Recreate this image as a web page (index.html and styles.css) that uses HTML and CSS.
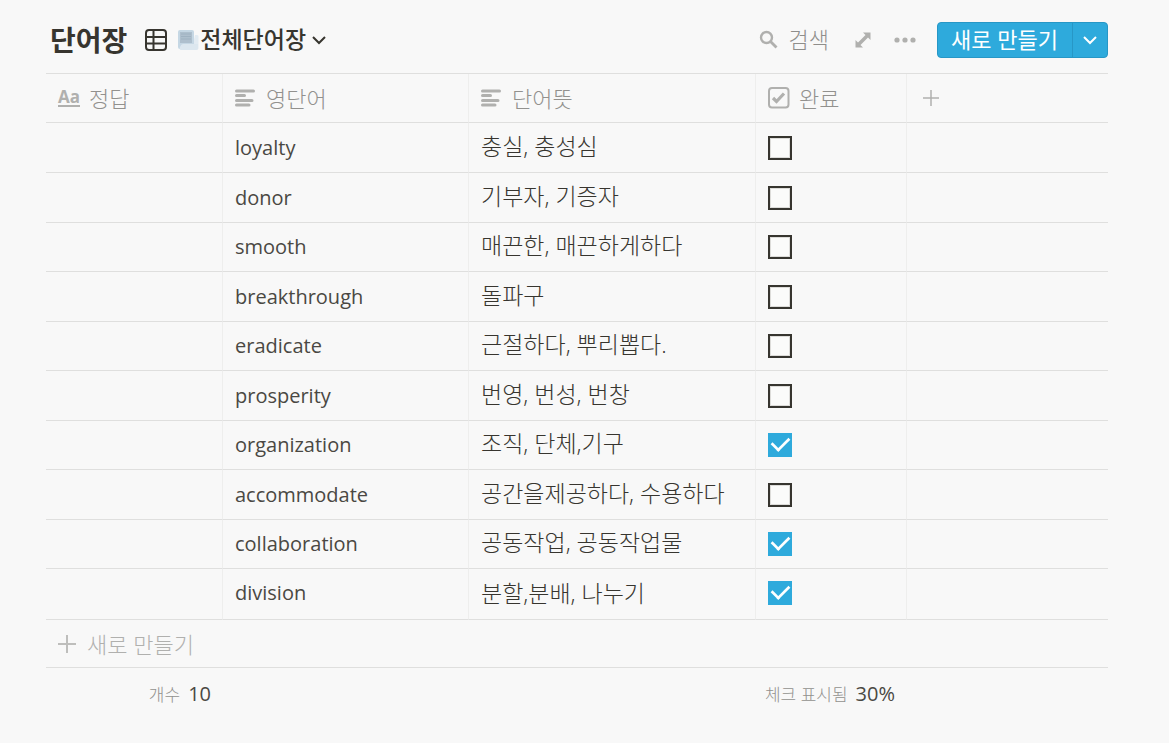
FILE: index.html
```html
<!DOCTYPE html>
<html lang="ko">
<head>
<meta charset="utf-8">
<meta name="viewport" content="width=device-width, initial-scale=1">
<title>단어장</title>
<link rel="stylesheet" href="styles.css">
</head>
<body>
<main class="database">
  <header class="toolbar">
    <h1 class="title">단어장</h1>
    <button type="button" class="view-button">
      <svg class="icon-grid" width="22" height="22" viewBox="0 0 22 22" fill="none" stroke="currentColor" stroke-width="2" aria-hidden="true"><rect x="1" y="1" width="20" height="20" rx="3"/><path d="M1 8h20M1 14.500h20M8.500 1v20"/></svg>
      <svg class="icon-page" width="22" height="22" viewBox="0 0 22 22" aria-hidden="true"><path d="M18 6c3 0 3 0 3.500 1v12q0 2-3 2h-4z" fill="#e2ebf2"/><path d="M3 1h12q2 0 2 2v17H3q-2 0-2-2V3q0-2 2-2z" fill="#c5d7e4"/><path d="M3 3h12v11H3z" fill="#aebfcd"/><path d="M4 5h10M4 7.500h10M4 10h10" stroke="#9fb2c1"/><path d="M6 15h15v4q0 2-2 2H4q-2 0-1-3 1-3 3-3z" fill="#dce7ef"/></svg>
      <span class="view-name">전체단어장</span>
      <svg class="icon-chevron" width="14" height="10" viewBox="0 0 14 10" fill="none" stroke="currentColor" stroke-width="2" aria-hidden="true"><path d="M1 2l6 6 6-6"/></svg>
    </button>
    <div class="actions">
      <button type="button" class="search-button">
        <svg width="20" height="20" viewBox="0 0 20 20" fill="none" stroke="#b0b0ae" aria-hidden="true"><circle cx="7.500" cy="7.500" r="5.500" stroke-width="2.400"/><path d="M11.500 11.500l6 6" stroke-width="2.800"/></svg>
        <span>검색</span>
      </button>
      <button type="button" class="icon-button" aria-label="전체 페이지로 열기">
        <svg width="16" height="16" viewBox="0 0 16 16" fill="#b0b0ae" aria-hidden="true"><path d="M8 0.500h7.500V8l-2.500-2.500-7.500 7.500L8 15.500H0.500V8l2.500 2.500 7.500-7.500z"/></svg>
      </button>
      <button type="button" class="icon-button more-button" aria-label="더 보기">
        <svg width="22" height="6" viewBox="0 0 22 6" fill="#b0b0ae" aria-hidden="true"><circle cx="3" cy="3" r="2.600"/><circle cx="11" cy="3" r="2.600"/><circle cx="19" cy="3" r="2.600"/></svg>
      </button>
      <div class="create">
        <button type="button" class="create-main">새로 만들기</button>
        <button type="button" class="create-menu" aria-label="템플릿 선택">
          <svg width="14" height="10" viewBox="0 0 14 10" fill="none" stroke="currentColor" stroke-width="2" aria-hidden="true"><path d="M1 2l6 6 6-6"/></svg>
        </button>
      </div>
    </div>
  </header>

  <table class="grid">
    <colgroup><col class="col-answer"><col class="col-word"><col class="col-meaning"><col class="col-done"><col></colgroup>
    <thead>
      <tr>
        <th scope="col"><span class="head"><span class="icon-aa" aria-hidden="true">Aa</span>정답</span></th>
        <th scope="col"><span class="head head-text"><svg width="20" height="18" viewBox="0 0 20 18" stroke="#b0b0ae" stroke-width="3" stroke-linecap="round" aria-hidden="true"><path d="M1.500 2h17M1.500 6.500h8M1.500 11.500h15.500M1.500 16h12.500"/></svg>영단어</span></th>
        <th scope="col"><span class="head head-text"><svg width="20" height="18" viewBox="0 0 20 18" stroke="#b0b0ae" stroke-width="3" stroke-linecap="round" aria-hidden="true"><path d="M1.500 2h17M1.500 6.500h8M1.500 11.500h15.500M1.500 16h12.500"/></svg>단어뜻</span></th>
        <th scope="col"><span class="head"><svg width="22" height="22" viewBox="0 0 22 22" fill="none" stroke="#b0b0ae" aria-hidden="true"><rect x="1" y="1" width="19.500" height="19.500" rx="3" stroke-width="2"/><path d="M5 11l3.500 3.500 7.500-8" stroke-width="3.200"/></svg>완료</span></th>
        <th scope="col"><button type="button" class="add-column" aria-label="속성 추가"><svg width="16" height="16" viewBox="0 0 16 16" stroke="#b0b0ae" stroke-width="1.500" aria-hidden="true"><path d="M0 8h16M8 0v16"/></svg></button></th>
      </tr>
    </thead>
    <tbody>
      <tr><td></td><td class="word">loyalty</td><td class="meaning">충실, 충성심</td><td><input type="checkbox" class="check" aria-label="loyalty 완료"></td><td></td></tr>
      <tr><td></td><td class="word">donor</td><td class="meaning">기부자, 기증자</td><td><input type="checkbox" class="check" aria-label="donor 완료"></td><td></td></tr>
      <tr><td></td><td class="word">smooth</td><td class="meaning">매끈한, 매끈하게하다</td><td><input type="checkbox" class="check" aria-label="smooth 완료"></td><td></td></tr>
      <tr><td></td><td class="word">breakthrough</td><td class="meaning">돌파구</td><td><input type="checkbox" class="check" aria-label="breakthrough 완료"></td><td></td></tr>
      <tr><td></td><td class="word">eradicate</td><td class="meaning">근절하다, 뿌리뽑다.</td><td><input type="checkbox" class="check" aria-label="eradicate 완료"></td><td></td></tr>
      <tr><td></td><td class="word">prosperity</td><td class="meaning">번영, 번성, 번창</td><td><input type="checkbox" class="check" aria-label="prosperity 완료"></td><td></td></tr>
      <tr><td></td><td class="word">organization</td><td class="meaning">조직, 단체,기구</td><td><input type="checkbox" class="check" aria-label="organization 완료" checked></td><td></td></tr>
      <tr><td></td><td class="word">accommodate</td><td class="meaning">공간을제공하다, 수용하다</td><td><input type="checkbox" class="check" aria-label="accommodate 완료"></td><td></td></tr>
      <tr><td></td><td class="word">collaboration</td><td class="meaning">공동작업, 공동작업물</td><td><input type="checkbox" class="check" aria-label="collaboration 완료" checked></td><td></td></tr>
      <tr><td></td><td class="word">division</td><td class="meaning">분할,분배, 나누기</td><td><input type="checkbox" class="check" aria-label="division 완료" checked></td><td></td></tr>
    </tbody>
    <tfoot>
      <tr class="new-row"><td colspan="5"><button type="button" class="new-button"><svg width="18" height="18" viewBox="0 0 18 18" stroke="#bebebc" stroke-width="2" aria-hidden="true"><path d="M0 9h18M9 0v18"/></svg>새로 만들기</button></td></tr>
      <tr class="summary"><td><span class="label">개수</span><span class="value">10</span></td><td></td><td></td><td><span class="label">체크 표시됨</span><span class="value">30%</span></td><td></td></tr>
    </tfoot>
  </table>
</main>
</body>
</html>
```
FILE: styles.css
```css
* {
  box-sizing: border-box;
}

body {
  margin: 0;
  background: #f8f8f8;
  color: #37352f;
  font-family: "Open Sans", "Noto Sans CJK KR", sans-serif;
  font-size: 22px;
  line-height: 30px;
}

button {
  display: flex;
  align-items: center;
  margin: 0;
  padding: 0;
  border: 0;
  background: none;
  color: inherit;
  font: inherit;
  white-space: nowrap;
  cursor: pointer;
}

svg {
  flex: none;
  display: block;
}

.database {
  padding: 7px 61px 24px 46px;
}

.toolbar {
  display: flex;
  align-items: center;
  height: 66px;
  padding-left: 4px;
}

.title {
  margin: 0 18px 0 0;
  padding-bottom: 2px;
  font-size: 28px;
  font-weight: 600;
  font-family: "Noto Sans CJK KR", sans-serif;
  line-height: 36px;
}

.view-button {
  font-weight: 500;
}

.view-name {
  font-size: 23px;
}

.icon-page {
  margin: 0 1px 0 10px;
}

.icon-chevron {
  margin-left: 6px;
}

.view-name,
.search-button span,
.create-main {
  padding-bottom: 2px;
}

.actions {
  display: flex;
  align-items: center;
  margin-left: auto;
}

.search-button {
  gap: 10px;
  color: #8f8e8b;
  font-weight: 300;
}

.icon-button {
  margin-left: 26px;
}

.more-button {
  margin-left: 23px;
}

.create {
  display: flex;
  height: 36px;
  margin-left: 21px;
  border: 1px solid #2797c6;
  border-radius: 4px;
  background: #2eaadc;
  color: #fff;
}

.create-main {
  padding-left: 13px;
  padding-right: 14px;
  font-weight: 400;
}

.create-menu {
  padding: 0 10px;
  border-left: 1px solid #2797c6;
}

.grid {
  width: 100%;
  table-layout: fixed;
  border-collapse: separate;
  border-spacing: 0;
  border-top: 1px solid #dfdfde;
  font-weight: 300;
}

.col-answer {
  width: 177px;
}

.col-word {
  width: 246px;
}

.col-meaning {
  width: 287px;
}

.col-done {
  width: 151px;
}

th,
td {
  height: 50px;
  padding: 0 12px;
  border-right: 1px solid #eeeeed;
  border-bottom: 1px solid #dfdfde;
  text-align: left;
  vertical-align: middle;
  white-space: nowrap;
}

th {
  height: 49px;
  color: #92918e;
  font-weight: 300;
}

tr > :last-child {
  border-right: 0;
}

tbody tr:nth-child(2n + 3) td {
  height: 49px;
}

tbody tr:last-child td {
  height: 51px;
  padding-bottom: 2px;
}

.head {
  display: flex;
  align-items: center;
  gap: 9px;
}

.head-text {
  gap: 11px;
}

.icon-aa {
  border-bottom: 2px solid #b0b0ae;
  color: #b0b0ae;
  font-size: 17px;
  font-weight: 700;
  line-height: 16px;
}

.add-column {
  margin-left: 4px;
}

.word {
  color: #4a4843;
  font-size: 20px;
  font-weight: 400;
}

.meaning {
  padding-bottom: 4px;
  font-size: 23px;
}

.check {
  appearance: none;
  display: grid;
  place-items: center;
  width: 24px;
  height: 24px;
  margin: 0;
  border: 2px solid #37352f;
  background: #fbfbfa;
  box-shadow: inset 0 0 0 1px #dddcd9;
}

.check:checked {
  border-color: #2eaadc;
  background: #2eaadc;
  box-shadow: none;
}

.check:checked::before {
  content: "";
  width: 16px;
  height: 9px;
  border: solid #fff;
  border-width: 0 0 3px 3px;
  transform: translateY(-3px) rotate(-45deg) scale(0.9);
}

.new-row td {
  height: 48px;
}

.new-button {
  gap: 11px;
  color: #b0b0ae;
}

.summary td {
  height: 50px;
  padding: 0 12px 0 0;
  border: 0;
  text-align: right;
}

.label {
  margin-right: 8px;
  color: #92918e;
  font-size: 17px;
}

.value {
  color: #4a4843;
  font-size: 20px;
  font-weight: 400;
}
```
